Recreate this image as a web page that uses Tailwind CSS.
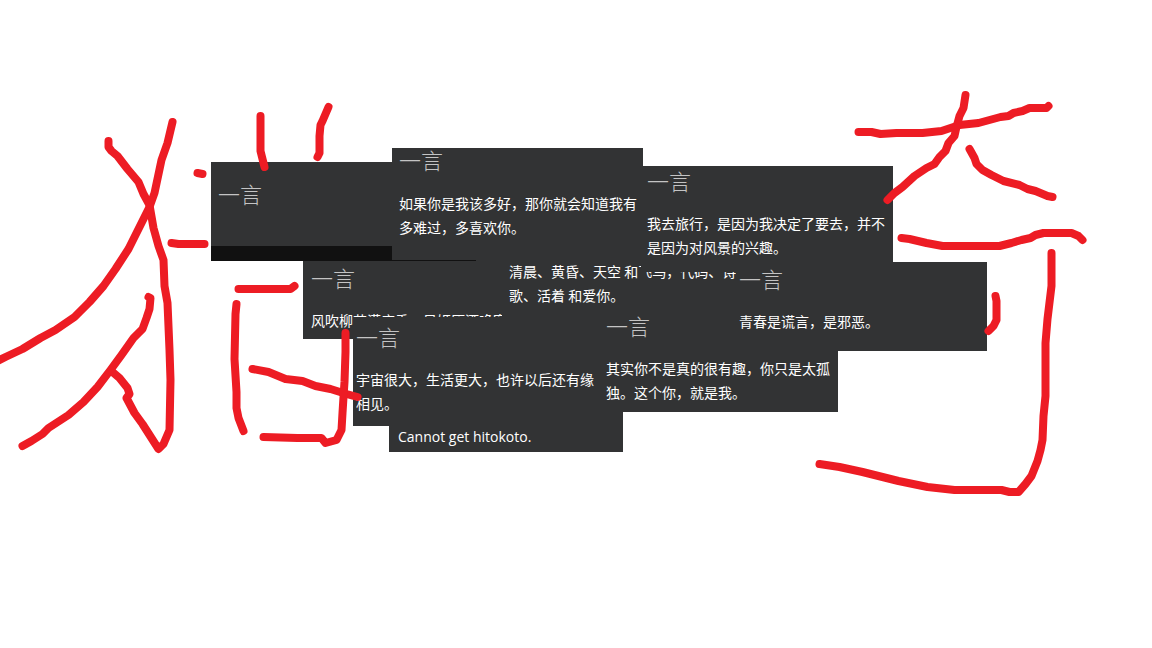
<!DOCTYPE html>
<html lang="zh-CN">
  <head>
    <meta charset="UTF-8" />
    <meta name="viewport" content="width=device-width, initial-scale=1.0" />
    <script src="https://cdn.jsdelivr.net/npm/@tailwindcss/browser@4"></script>
    <title>一言</title>
  </head>
  <body class="bg-white">
    <main
      class="relative min-h-screen w-full overflow-hidden font-['Open_Sans','Noto_Sans_CJK_SC',sans-serif] text-sm leading-6 text-white"
    >
      <section class="absolute left-[211px] top-[162px] flex h-[99px] w-[265px] flex-col justify-between bg-[#323334]">
        <h2 class="px-[7px] pt-[21px] font-['Noto_Sans_CJK_SC',sans-serif] text-[22px] font-light leading-5 text-[#c4c4c4]">一言</h2>
        <div class="h-[15px] bg-[#111111]"></div>
      </section>
      <section class="absolute left-[303px] top-[261px] h-[78px] w-[252px] bg-[#323334] px-2 pt-[6px]">
        <h2 class="mb-[21px] font-['Noto_Sans_CJK_SC',sans-serif] text-[22px] font-light leading-5 text-[#c4c4c4]">一言</h2>
        <p class="font-['Noto_Sans_CJK_SC',sans-serif]">风吹柳花满店香，吴姬压酒唤客尝。</p>
      </section>
      <section class="absolute left-[502px] top-[250px] h-[78px] w-[252px] bg-[#323334] px-[7px] pt-[9px]">
        <p class="font-['Noto_Sans_CJK_SC',sans-serif]">清晨、黄昏、天空 和飞鸟，代码、诗歌、活着 和爱你。</p>
      </section>
      <section class="absolute left-[392px] top-[148px] h-[113px] w-[251px] bg-[#323334] pl-[7px] pr-1 pt-px">
        <h2 class="mb-[22px] font-['Noto_Sans_CJK_SC',sans-serif] text-[22px] font-light leading-5 text-[#c4c4c4]">一言</h2>
        <p class="font-['Noto_Sans_CJK_SC',sans-serif]">如果你是我该多好，那你就会知道我有多难过，多喜欢你。</p>
        <div class="absolute bottom-0 left-0 h-px w-[84px] bg-[#111111]"></div>
      </section>
      <section class="absolute left-[641px] top-[166px] h-[106px] w-[252px] bg-[#323334] px-[6px] pt-[4px]">
        <h2 class="mb-[21px] font-['Noto_Sans_CJK_SC',sans-serif] text-[22px] font-light leading-5 text-[#c4c4c4]">一言</h2>
        <p class="font-['Noto_Sans_CJK_SC',sans-serif]">我去旅行，是因为我决定了要去，并不是因为对风景的兴趣。</p>
      </section>
      <section class="absolute left-[389px] top-[412px] h-10 w-[234px] bg-[#323334] px-[9px] pt-[13px]">
        <p>Cannot get hitokoto.</p>
      </section>
      <section class="absolute left-[353px] top-[317px] h-[109px] w-[252px] bg-[#323334] px-[3px] pt-[9px]">
        <h2 class="mb-[21px] font-['Noto_Sans_CJK_SC',sans-serif] text-[22px] font-light leading-5 text-[#c4c4c4]">一言</h2>
        <p class="font-['Noto_Sans_CJK_SC',sans-serif]">宇宙很大，生活更大，也许以后还有缘相见。</p>
      </section>
      <section class="absolute left-[603px] top-[311px] h-[101px] w-[235px] bg-[#323334] px-[3px] pt-[4px]">
        <h2 class="mb-[21px] font-['Noto_Sans_CJK_SC',sans-serif] text-[22px] font-light leading-5 text-[#c4c4c4]">一言</h2>
        <p class="font-['Noto_Sans_CJK_SC',sans-serif]">其实你不是真的很有趣，你只是太孤独。这个你，就是我。</p>
      </section>
      <section class="absolute left-[736px] top-[262px] h-[89px] w-[251px] bg-[#323334] px-[3px] pt-[6px]">
        <h2 class="mb-[21px] font-['Noto_Sans_CJK_SC',sans-serif] text-[22px] font-light leading-5 text-[#c4c4c4]">一言</h2>
        <p class="font-['Noto_Sans_CJK_SC',sans-serif]">青春是谎言，是邪恶。</p>
      </section>

      <!-- brush strokes over the cards -->
      <svg
        xmlns="http://www.w3.org/2000/svg"
        width="1152"
        height="648"
        viewBox="0.5 0 1152 648"
        fill="none"
        stroke="#ed1c24"
        stroke-width="8"
        stroke-linecap="round"
        stroke-linejoin="round"
        class="pointer-events-none absolute left-0 top-0 max-w-none"
      >
        <path d="M173 122L168 143L162 160L155 193L150 207L138 231L129 249L116 269L104 286L90 302L75 317L56 330L41 338L23 349L6 357L-4 362"></path>
        <path d="M109 141L109 147L112 151L118 156L128 169L139 182L144 194L150 205L154 228L159 246L164 260L165 286L168 303L170 350L171 380L170 430L164 444L159 449L143 424L135 413L127 398L130 394L128 388L120 378L113 372"></path>
        <path d="M149 297L151 298L150 309L147 318L143 329L134 338L122 355L111 370L98 387L84 402L69 415L49 428L43 434L32 441L23 446"></path>
        <path d="M198 173L203 174M172 243L179 244L205 244"></path>
        <path d="M261 116L261 151L263 159L265 167M329 107L323 121L321 125L320 136L320 153L318 157"></path>
        <path d="M239 289L291 289L295 286"></path>
        <path d="M237 304L236 314L235 359L237 392L237 408L239 418L244 431"></path>
        <path d="M253 369L269 372L286 379L303 381L316 386L331 389L347 394L358 397"></path>
        <path d="M346 333L346 352L345 382L344 397L343 413L342 430L337 440L326 443L322 438L298 438L264 437"></path>
        <path d="M859 132L872 132L881 134L897 133L923 133L942 131L960 125L979 123L1001 117L1009 116L1014 113L1023 111L1030 108L1047 108L1049 106"></path>
        <path d="M966 95L964 108L960 116L957 127L955 136L949 143L946 151L940 157L935 164L927 168L915 176L903 187L895 193L888 200"></path>
        <path d="M970 149L975 158L977 164L983 170L992 175L1004 181L1020 185L1028 189L1036 191L1048 196L1053 197"></path>
        <path d="M902 238L910 239L927 243L943 246L1000 246L1012 243L1022 240L1031 238L1036 235L1044 233L1072 233L1079 236L1083 240"></path>
        <path d="M1052 253L1052 286L1048 319L1046 343L1046 396L1044 416L1043 440L1041 450L1038 461L1032 476L1026 484L1019 492L1010 492L1002 490L955 490L928 487L899 481L863 472L840 467L820 464"></path>
        <path d="M996 296L997 301L997 320L994 326L989 331"></path>
      </svg>
    </main>
  </body>
</html>
